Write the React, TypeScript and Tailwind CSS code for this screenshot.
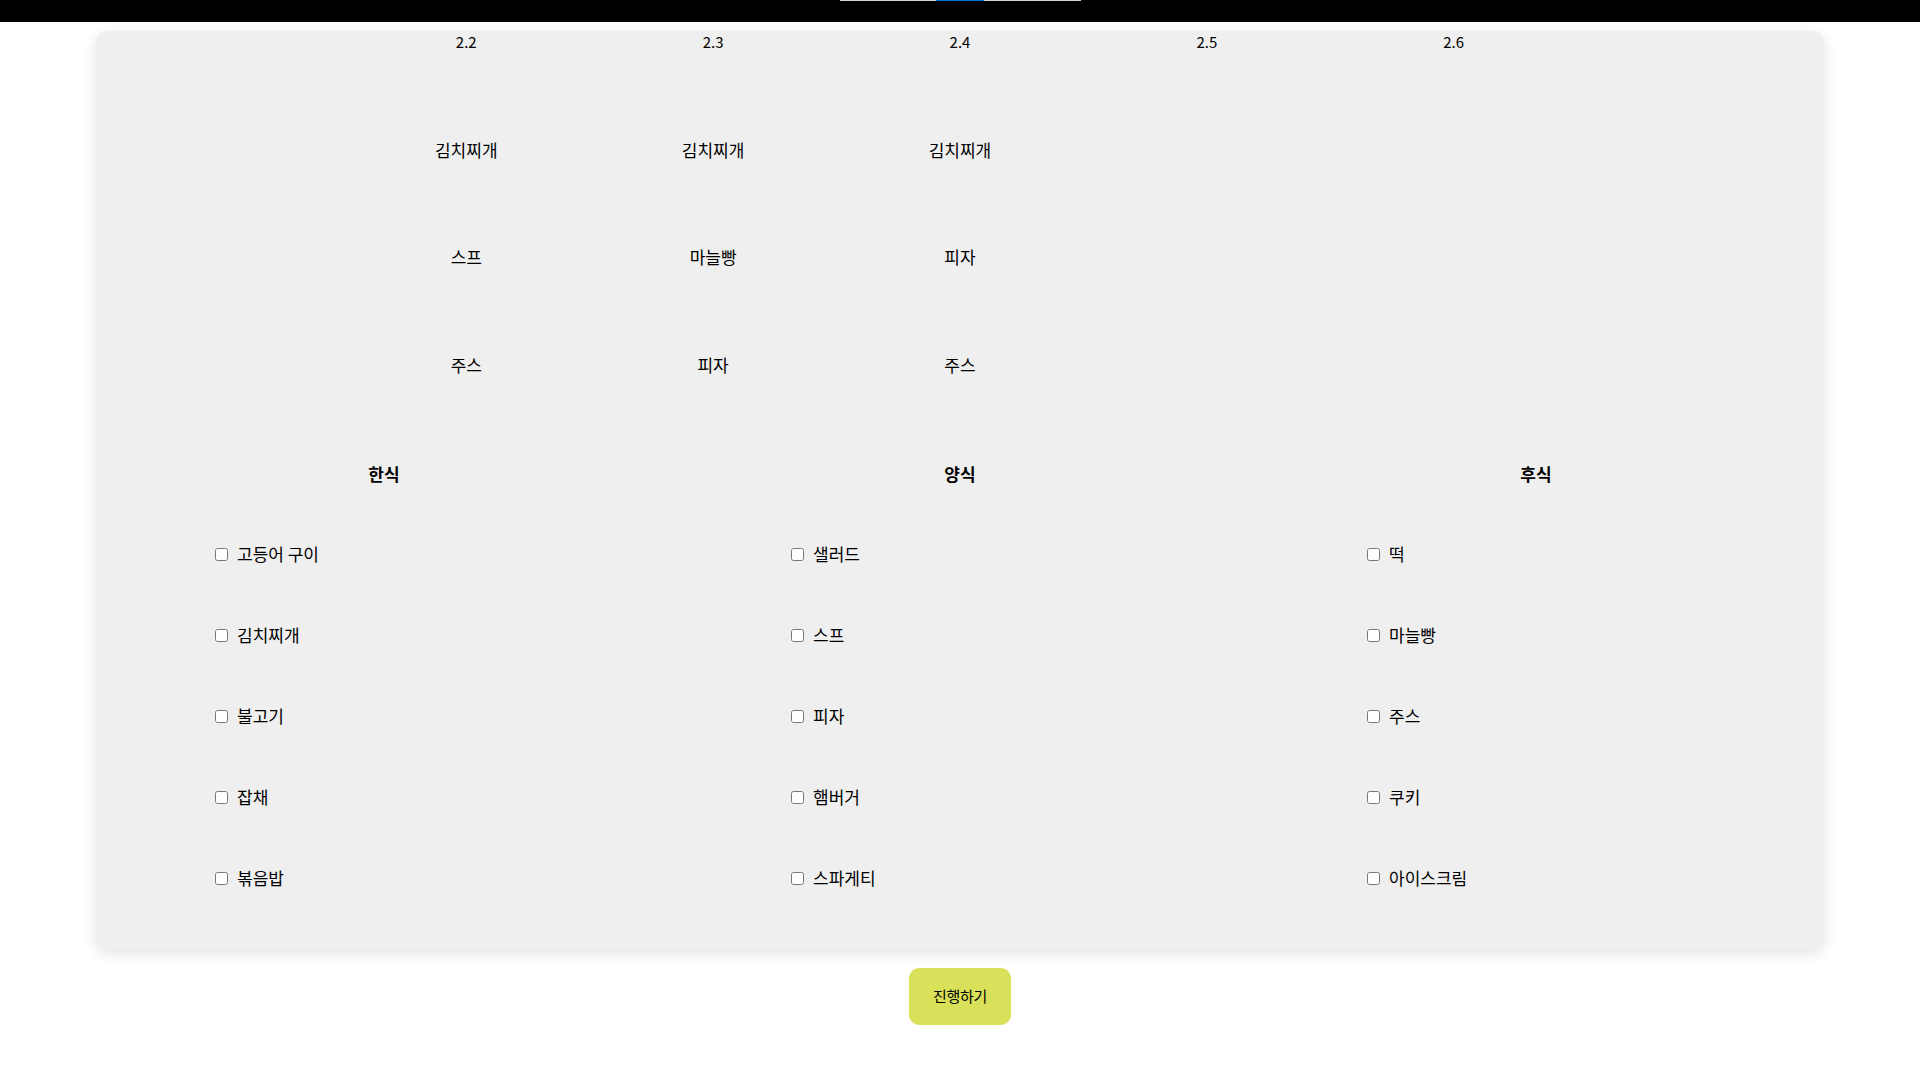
import React from "react";

const dates = ["", "2.2", "2.3", "2.4", "2.5", "2.6", ""];
const menu: string[][] = [
  ["", "김치찌개", "김치찌개", "김치찌개", "", "", ""],
  ["", "스프", "마늘빵", "피자", "", "", ""],
  ["", "주스", "피자", "주스", "", "", ""],
];

const categories: { title: string; items: string[] }[] = [
  { title: "한식", items: ["고등어 구이", "김치찌개", "불고기", "잡채", "볶음밥"] },
  { title: "양식", items: ["샐러드", "스프", "피자", "햄버거", "스파게티"] },
  { title: "후식", items: ["떡", "마늘빵", "주스", "쿠키", "아이스크림"] },
];

export default function App() {
  return (
    <div
      className="min-h-screen bg-white text-black"
      style={{ fontFamily: '"Noto Sans CJK KR", "Noto Sans", sans-serif' }}
    >
      {/* top bar */}
      <div className="h-[22px] bg-black flex flex-col">
        <div className="ml-[840px] w-[241px] h-px bg-[#d4d4d4] flex">
          <div className="ml-[96px] w-[48px] h-px bg-[#0078d4]" />
        </div>
      </div>

      {/* card */}
      <div className="mx-[96px] mt-[9px] rounded-[12px] bg-[#efefef] shadow-[0_4px_14px_rgba(0,0,0,0.12)] pb-[30px]">
        {/* schedule table */}
        <div className="grid grid-cols-7">
          {dates.map((d, i) => (
            <div key={"d" + i} className="h-[22px] flex items-center justify-center text-[15px] leading-[22px]">
              {d}
            </div>
          ))}
        </div>
        <div className="mt-[43px] flex flex-col">
          {menu.map((row, r) => (
            <div key={"r" + r} className="grid grid-cols-7">
              {row.map((m, c) => (
                <div
                  key={"c" + c}
                  className="h-[107.5px] flex items-center justify-center text-[17px] leading-[22px]"
                >
                  {m}
                </div>
              ))}
            </div>
          ))}
        </div>

        {/* categories */}
        <div className="mt-[44px] grid grid-cols-3">
          {categories.map((cat) => (
            <div key={cat.title} className="flex flex-col">
              <div className="h-[22px] flex items-center justify-center text-[17px] font-bold leading-[22px]">
                {cat.title}
              </div>
              <div className="mt-[29px] flex flex-col">
                {cat.items.map((it) => (
                  <label key={it} className="h-[81px] flex items-center pl-[119px]">
                    <input type="checkbox" className="m-0 w-[13px] h-[13px]" />
                    <span className="ml-[9px] text-[17px] leading-[22px]">{it}</span>
                  </label>
                ))}
              </div>
            </div>
          ))}
        </div>
      </div>

      {/* button */}
      <div className="flex justify-center mt-[19px]">
        <button className="w-[102px] h-[57px] rounded-[10px] bg-[#d9e05a] text-[15px] tracking-[-0.25px] text-black">
          진행하기
        </button>
      </div>
    </div>
  );
}
